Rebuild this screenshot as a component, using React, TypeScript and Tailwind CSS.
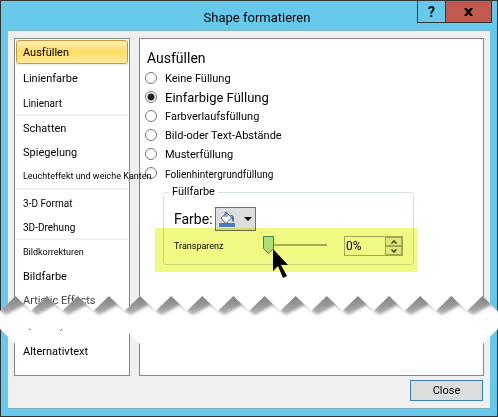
import { useState } from "react";
import clsx from "clsx";

type NavItem = {
  label: string;
  size?: string;
  separator?: boolean;
};

const NAV_ITEMS: NavItem[] = [
  { label: "Ausfüllen", separator: true },
  { label: "Linienfarbe" },
  { label: "Linienart", size: "text-[10px]", separator: true },
  { label: "Schatten" },
  { label: "Spiegelung" },
  {
    label: "Leuchteffekt und weiche Kanten",
    size: "text-[9px]",
    separator: true,
  },
  { label: "3-D Format", size: "text-[10px]" },
  { label: "3D-Drehung", size: "text-[10px]", separator: true },
  { label: "Bildkorrekturen", size: "text-[9px]" },
  { label: "Bildfarbe" },
  { label: "Artistic Effects", size: "text-[11px] text-[#444]" },
];

const FILL_OPTIONS = [
  { id: "none", label: "Keine Füllung", size: "text-[11px]" },
  { id: "solid", label: "Einfarbige Füllung", size: "text-[13px]" },
  { id: "gradient", label: "Farbverlaufsfüllung", size: "text-[11px]" },
  { id: "picture", label: "Bild-oder Text-Abstände", size: "text-[11px]" },
  { id: "pattern", label: "Musterfüllung", size: "text-[11px]" },
  { id: "background", label: "Folienhintergrundfüllung", size: "text-[10px]" },
];

const TEETH = 16;
const TOOTH = 498 / TEETH;

function zigzag(valley: number, peak: number) {
  const points: string[] = [];
  for (let i = -1; i <= TEETH; i++) {
    points.push(`${i * TOOTH},${valley}`, `${(i + 0.5) * TOOTH},${peak}`);
  }
  return points;
}

// lower edge of the shadow: deepest just right of each valley
function shadowEdge() {
  const points: string[] = [];
  for (let i = -1; i <= TEETH; i++) {
    points.push(`${i * TOOTH + 6},19`, `${i * TOOTH + 24},9`);
  }
  return points;
}

function TornStrip() {
  const top = zigzag(15, 0);
  const bottom = zigzag(33, 48).reverse();

  return (
    <svg
      viewBox="0 0 498 50"
      className="pointer-events-none absolute -inset-x-px top-[295px] z-20"
      aria-hidden="true"
    >
      <defs>
        <clipPath id="strip">
          <polygon points={[...top, ...bottom].join(" ")} />
        </clipPath>
        <linearGradient
          id="shade"
          gradientUnits="userSpaceOnUse"
          x1="0"
          y1="0"
          x2="0"
          y2="20"
        >
          <stop offset="0" stopColor="#858585" />
          <stop offset="0.5" stopColor="#999" />
          <stop offset="1" stopColor="#bbb" />
        </linearGradient>
        <filter
          id="soft"
          filterUnits="userSpaceOnUse"
          x="-40"
          y="-30"
          width="580"
          height="80"
          colorInterpolationFilters="sRGB"
        >
          <feGaussianBlur stdDeviation="1.8" />
        </filter>
      </defs>
      <g clipPath="url(#strip)">
        <rect width="498" height="50" fill="#fff" />
        <polygon
          points={["-40,-20", ...shadowEdge(), "540,-20"].join(" ")}
          fill="url(#shade)"
          filter="url(#soft)"
        />
        <path d="M29 33l3 2M60 35l2-2" stroke="#444" />
      </g>
    </svg>
  );
}

function PaintBucketIcon() {
  return (
    <svg width="17" height="17" viewBox="0 0 17 17" aria-hidden="true">
      <rect y="12" width="16" height="4" fill="#4a7ebb" />
      <path
        d="M2 7l6-5 5 5-5 5H6z"
        fill="#f4f6fa"
        stroke="#54698c"
        strokeLinejoin="round"
      />
      <path d="M8 10l4-4 1 1-4 4z" fill="#b9c5d8" />
      <path d="M6 6V1.500q1-1.500 2 0V6" fill="none" stroke="#54698c" />
      <path d="M11 4q5-1 4 7-3-1-2-5z" fill="#3a70b5" />
    </svg>
  );
}

function TransparencySlider({
  value,
  onChange,
}: {
  value: number;
  onChange: (value: number) => void;
}) {
  return (
    <div className="relative h-5 w-16">
      <svg className="h-5 w-16" viewBox="0 0 64 20" aria-hidden="true">
        <path d="M0 9h64" stroke="#b0b0b0" strokeWidth="2" />
        <g transform={`translate(${value * 0.54} 0)`}>
          <path
            d="M.5 .5h10v12l-5 5-5-5z"
            fill="#b9e2ef"
            stroke="#348e91"
          />
        </g>
      </svg>
      <input
        id="transparency"
        type="range"
        min={0}
        max={100}
        value={value}
        onChange={(e) => onChange(Number(e.target.value))}
        className="absolute inset-0 w-full opacity-0"
      />
    </div>
  );
}

function MouseCursor() {
  return (
    <svg
      width="17"
      height="32"
      viewBox="0 0 17 32"
      className="pointer-events-none absolute bottom-[-16px] left-[108px] z-20"
      aria-hidden="true"
    >
      <path d="M1 1v22l5-5 5 12 4-2-6-11h7z" fill="#000" />
    </svg>
  );
}

export default function App() {
  const [active, setActive] = useState("Ausfüllen");
  const [fill, setFill] = useState("solid");
  const [transparency, setTransparency] = useState(0);

  const step = (delta: number) =>
    setTransparency((value) => Math.min(100, Math.max(0, value + delta)));

  const navButton = (item: NavItem) => (
    <button
      type="button"
      onClick={() => setActive(item.label)}
      className={clsx(
        "flex h-6 w-full items-center whitespace-nowrap rounded-[3px] border pl-[6px] pt-[2px] text-left",
        item.size ?? "text-[11px]",
        active === item.label
          ? "border-[#c29a3a] bg-gradient-to-b from-[#fdeeb3] via-[#ffdc62] to-[#ffea9c]"
          : "border-transparent"
      )}
    >
      {item.label}
    </button>
  );

  return (
    <main className="relative flex min-h-screen flex-col border border-[#333] bg-[#66c9ea] px-[7px] pb-[7px] font-['Roboto','Liberation_Sans',sans-serif] text-black">
      <header className="relative flex h-[29px] items-end justify-center pb-[2px] pl-4">
        <h1 className="text-[13px] leading-5">Shape formatieren</h1>
        <div className="absolute -right-[2px] -top-px flex h-[23px]">
          <button
            type="button"
            aria-label="Hilfe"
            className="w-[29px] border border-[#333] text-[14px] font-bold leading-5"
          >
            ?
          </button>
          <button
            type="button"
            aria-label="Schließen"
            className="-ml-px flex w-[47px] items-center justify-center border border-[#333] bg-[#c35a50]"
          >
            <svg width="9" height="8" viewBox="0 0 9 8" aria-hidden="true">
              <path d="M1 0l7 8M8 0L1 8" stroke="#000" strokeWidth="2.4" />
            </svg>
          </button>
        </div>
      </header>

      <div className="flex flex-1 flex-col border-b border-t border-[#7fb4c6] bg-[#f0f0f0] px-[6px]">
        <div className="flex flex-1 gap-[9px] pt-[7px]">
          <nav className="relative z-10 w-[116px] shrink-0 border border-[#82878f] bg-white p-px">
            <ul>
              {NAV_ITEMS.map((item) => (
                <li
                  key={item.label}
                  className={clsx(
                    item.separator && "border-b-2 border-[#f0f0f6]"
                  )}
                >
                  {navButton(item)}
                </li>
              ))}
              <li className="mt-[27px]">
                {navButton({ label: "Alternativtext" })}
              </li>
            </ul>
          </nav>

          <section className="flex-1 border border-[#82878f] bg-white pl-[5px] pt-[9px]">
            <h2 className="pl-[2px] text-[14px] leading-5">Ausfüllen</h2>
            {FILL_OPTIONS.map((option) => (
              <label
                key={option.id}
                className={clsx(
                  "flex h-[19px] items-center gap-2",
                  option.size
                )}
              >
                <input
                  type="radio"
                  name="fill"
                  checked={fill === option.id}
                  onChange={() => setFill(option.id)}
                  className="size-3 appearance-none rounded-full border border-[#777] bg-white checked:bg-[radial-gradient(circle,#222_0_3px,#fff_4px)]"
                />
                <span className="pt-[3px]">{option.label}</span>
              </label>
            ))}

            <fieldset className="relative ml-[18px] mt-[2px] w-[251px] rounded-[3px] border border-[#d5dfe5] pb-[6px] pl-[10px]">
              <legend className="-ml-[5px] px-[3px] text-[11px] leading-4">
                Füllfarbe
              </legend>
              <div className="mt-[5px] flex h-7 items-center gap-[6px]">
                <span className="w-[35px] pt-px text-[14px]">Farbe:</span>
                <button
                  type="button"
                  aria-label="Farbe"
                  className="flex h-6 w-[41px] items-center gap-2 border border-[#707070] bg-[#ddd] pl-[3px]"
                >
                  <PaintBucketIcon />
                  <svg width="8" height="4" aria-hidden="true">
                    <path d="M0 0h8L4 4z" />
                  </svg>
                </button>
              </div>
              <div className="mt-px flex h-6 items-center">
                <label
                  htmlFor="transparency"
                  className="w-[89px] pt-[2px] text-[9px]"
                >
                  Transparenz
                </label>
                <TransparencySlider
                  value={transparency}
                  onChange={setTransparency}
                />
                <div className="ml-[17px] flex h-5 w-[59px] border border-[#aaa]">
                  <input
                    aria-label="Transparenz in Prozent"
                    value={`${transparency}%`}
                    onChange={(e) =>
                      setTransparency(
                        Math.min(100, parseInt(e.target.value, 10) || 0)
                      )
                    }
                    className="w-10 bg-white pl-px text-[12px] outline-none"
                  />
                  <div className="flex flex-1 flex-col">
                    <button
                      type="button"
                      aria-label="Mehr"
                      onClick={() => step(1)}
                      className="flex flex-1 items-center justify-center border border-[#aaa] bg-[#eee]"
                    >
                      <svg width="6" height="4" aria-hidden="true">
                        <path
                          d="M0.500 3.500L3 1l2.500 2.500"
                          fill="none"
                          stroke="#333"
                          strokeWidth="1.400"
                        />
                      </svg>
                    </button>
                    <button
                      type="button"
                      aria-label="Weniger"
                      onClick={() => step(-1)}
                      className="flex flex-1 items-center justify-center border border-[#aaa] bg-[#eee]"
                    >
                      <svg width="6" height="4" aria-hidden="true">
                        <path
                          d="M0.500 0.500L3 3l2.500-2.500"
                          fill="none"
                          stroke="#333"
                          strokeWidth="1.400"
                        />
                      </svg>
                    </button>
                  </div>
                </div>
              </div>
              <div className="pointer-events-none absolute -bottom-2 -left-[9px] -right-1 h-11 bg-[#f0f981] mix-blend-multiply" />
              <MouseCursor />
            </fieldset>
          </section>
        </div>

        <footer className="flex justify-end pb-[7px] pr-px pt-1">
          <button
            type="button"
            className="h-[21px] w-[73px] border border-[#3c7fb1] bg-[#ddd] text-[11px] leading-4"
          >
            Close
          </button>
        </footer>
      </div>

      <TornStrip />
    </main>
  );
}
